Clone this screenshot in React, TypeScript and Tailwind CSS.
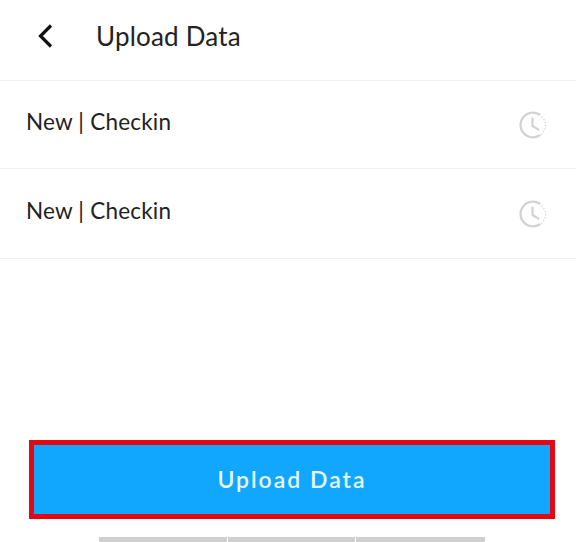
import React from 'react';

const rows = ['New | Checkin', 'New | Checkin'];

function ClockIcon() {
  return (
    <svg width="30" height="30" viewBox="0 0 30 30" fill="none" stroke="#d2d2d2" strokeLinecap="round" strokeLinejoin="round">
      <path d="M21.5 25.5A12.4 12.4 0 1 1 21.5 4.5" strokeWidth="2.2" />
      <path d="M14.5 8.5v7.5l6 3.6" strokeWidth="2.2" />
      <path d="M24 7v.1M26 9.6v.1M27.2 12.6v.1M27.6 15.6v.1M27 18.8v.1M25.6 21.6v.1M23.8 24v.1" strokeWidth="1.5" stroke="#d8d8d8" />
    </svg>
  );
}

export default function App() {
  return (
    <div className="h-[542px] w-[576px] bg-white flex flex-col overflow-hidden text-[#222222] font-['Lato',sans-serif]">
      <div className="h-[81px] shrink-0 flex items-center border-b border-[#f0f0f0] pl-[36px] pb-[9px]">
        <svg width="18" height="26" viewBox="0 0 18 26" fill="none" stroke="#111111" strokeWidth="3.2">
          <path d="M15 2.5L4.5 13L15 23.5" />
        </svg>
        <span className="ml-[42px] mt-[1px] text-[26px] tracking-[0.2px]">Upload Data</span>
      </div>

      {rows.map((label, i) => (
        <div
          key={i}
          className={`shrink-0 flex items-center justify-between border-b border-[#f0f0f0] pl-[26px] pr-[28px] ${i === 0 ? 'h-[88px]' : 'h-[90px]'}`}
        >
          <span className="text-[22.5px] tracking-[0.2px] mb-[6px]">{label}</span>
          <ClockIcon />
        </div>
      ))}

      <div className="flex-1" />

      <button className="ml-[29px] mr-[21px] h-[79px] shrink-0 border-[5px] border-[#e30613] bg-[#11a7ff] text-[#e6f7ff] text-[23px] font-semibold tracking-[2px] font-['Lato',sans-serif]">
        Upload Data
      </button>

      <div className="mt-[18px] h-[5px] shrink-0 flex gap-px pl-[99px]">
        <div className="w-[128px] bg-[#cfcfcf]" />
        <div className="w-[127px] bg-[#cfcfcf]" />
        <div className="w-[129px] bg-[#cfcfcf]" />
      </div>
    </div>
  );
}
